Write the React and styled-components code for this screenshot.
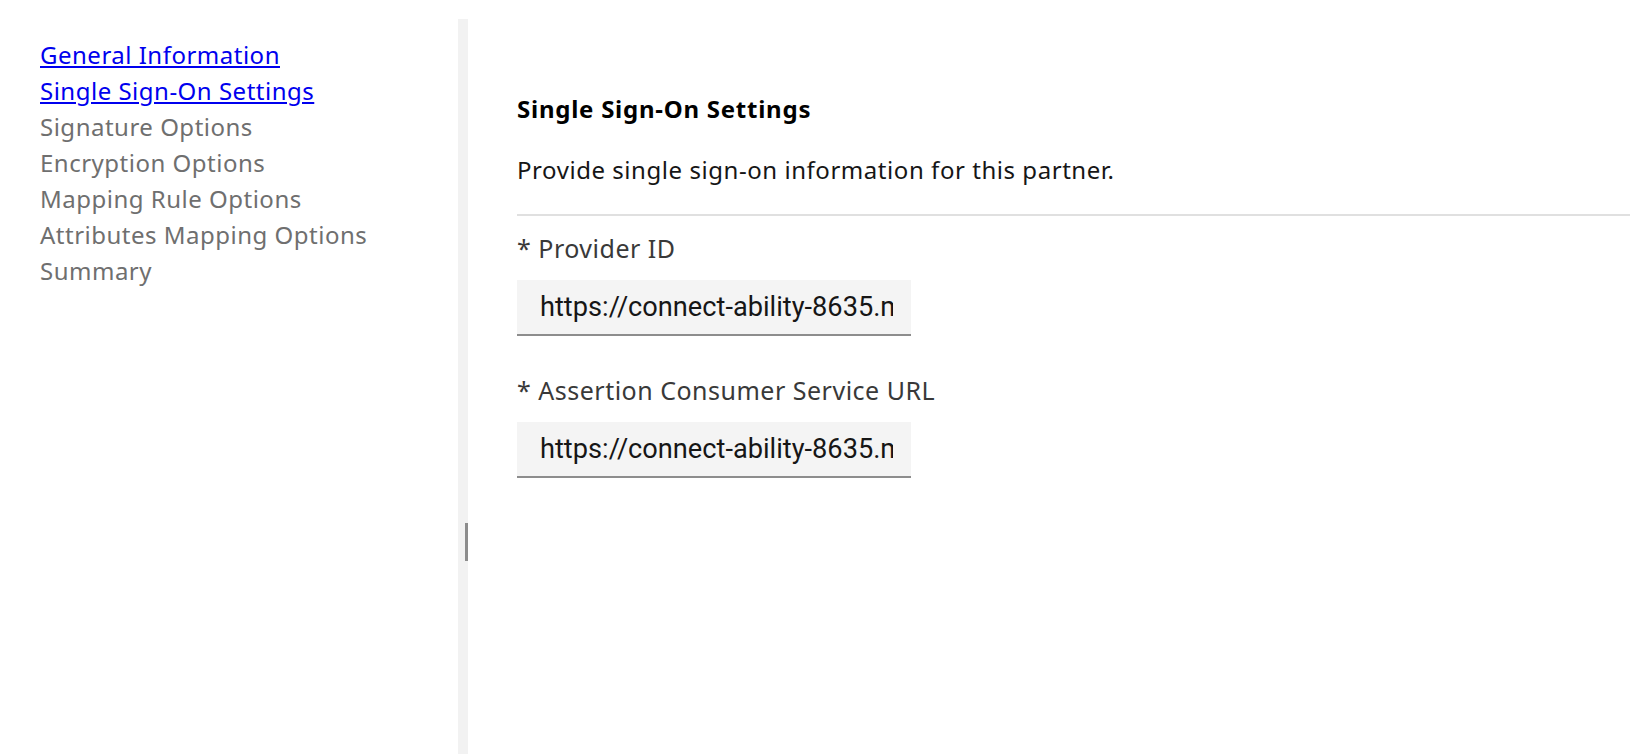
import React from "react";
import styled, { createGlobalStyle } from "styled-components";

const GlobalStyle = createGlobalStyle`
  html, body {
    margin: 0;
    padding: 0;
    background: #ffffff;
    font-family: "Noto Sans", "Open Sans", sans-serif;
  }
`;

const steps = [
  { title: "General Information", done: true },
  { title: "Single Sign-On Settings", done: true },
  { title: "Signature Options" },
  { title: "Encryption Options" },
  { title: "Mapping Rule Options" },
  { title: "Attributes Mapping Options" },
  { title: "Summary" },
];

const fields = [
  { label: "* Provider ID", value: "https://connect-ability-8635.my.example.com/saml/sp" },
  {
    label: "* Assertion Consumer Service URL",
    value: "https://connect-ability-8635.my.example.com/saml/acs",
  },
];

const App = () => {
  return (
    <Page>
      <GlobalStyle />
      <Sidebar>
        <Steps>
          {steps.map((s) => (
            <Step key={s.title}>
              {s.done ? <StepLink href="#">{s.title}</StepLink> : <StepText>{s.title}</StepText>}
            </Step>
          ))}
        </Steps>
      </Sidebar>
      <Splitter>
        <Handle />
      </Splitter>
      <Main>
        <Heading>Single Sign-On Settings</Heading>
        <Description>Provide single sign-on information for this partner.</Description>
        <Divider />
        {fields.map((f) => (
          <Field key={f.label}>
            <Label>{f.label}</Label>
            <Input type="text" defaultValue={f.value} readOnly />
          </Field>
        ))}
      </Main>
    </Page>
  );
};

const Page = styled.div`
  display: flex;
  height: 100vh;
  overflow: hidden;
`;

const Sidebar = styled.aside`
  width: 458px;
  flex-shrink: 0;
  box-sizing: border-box;
  padding: 37px 0 0 40px;
`;

const Steps = styled.ul`
  margin: 0;
  padding: 0;
  list-style: none;
`;

const Step = styled.li`
  font-size: 24px;
  line-height: 36px;
  letter-spacing: 0.5px;
`;

const StepLink = styled.a`
  color: #0000ee;
  text-decoration: underline;
  text-underline-offset: 2px;
`;

const StepText = styled.span`
  color: #6f6f6f;
`;

const Splitter = styled.div`
  position: relative;
  width: 10px;
  flex-shrink: 0;
  margin-top: 19px;
  background: #f2f2f2;
`;

const Handle = styled.div`
  position: absolute;
  right: 0;
  top: 504px;
  width: 3px;
  height: 38px;
  background: #8d8d8d;
`;

const Main = styled.main`
  flex: 1;
  padding: 93px 0 0 49px;
  min-width: 0;
`;

const Heading = styled.h2`
  margin: 0;
  font-size: 24px;
  line-height: 32px;
  font-weight: 700;
  letter-spacing: 0.75px;
  color: #000000;
`;

const Description = styled.p`
  margin: 29px 0 0;
  font-size: 24px;
  line-height: 32px;
  letter-spacing: 0.55px;
  color: #161616;
`;

const Divider = styled.hr`
  margin: 28px 0 0;
  border: none;
  height: 2px;
  background: #e0e0e0;
`;

const Field = styled.div`
  display: flex;
  flex-direction: column;
  align-items: flex-start;
  gap: 18px;
  margin-top: 18px;
  & + & {
    margin-top: 40px;
  }
`;

const Label = styled.label`
  font-size: 25px;
  line-height: 28px;
  color: #393939;
  letter-spacing: 0.5px;
`;

const Input = styled.input`
  box-sizing: border-box;
  width: 394px;
  height: 56px;
  padding: 0 18px 0 23px;
  border: none;
  border-bottom: 2px solid #8d8d8d;
  background: #f4f4f4;
  font-family: Roboto, "Liberation Sans", sans-serif;
  font-size: 27.2px;
  color: #161616;
  outline: none;
`;

export default App;
